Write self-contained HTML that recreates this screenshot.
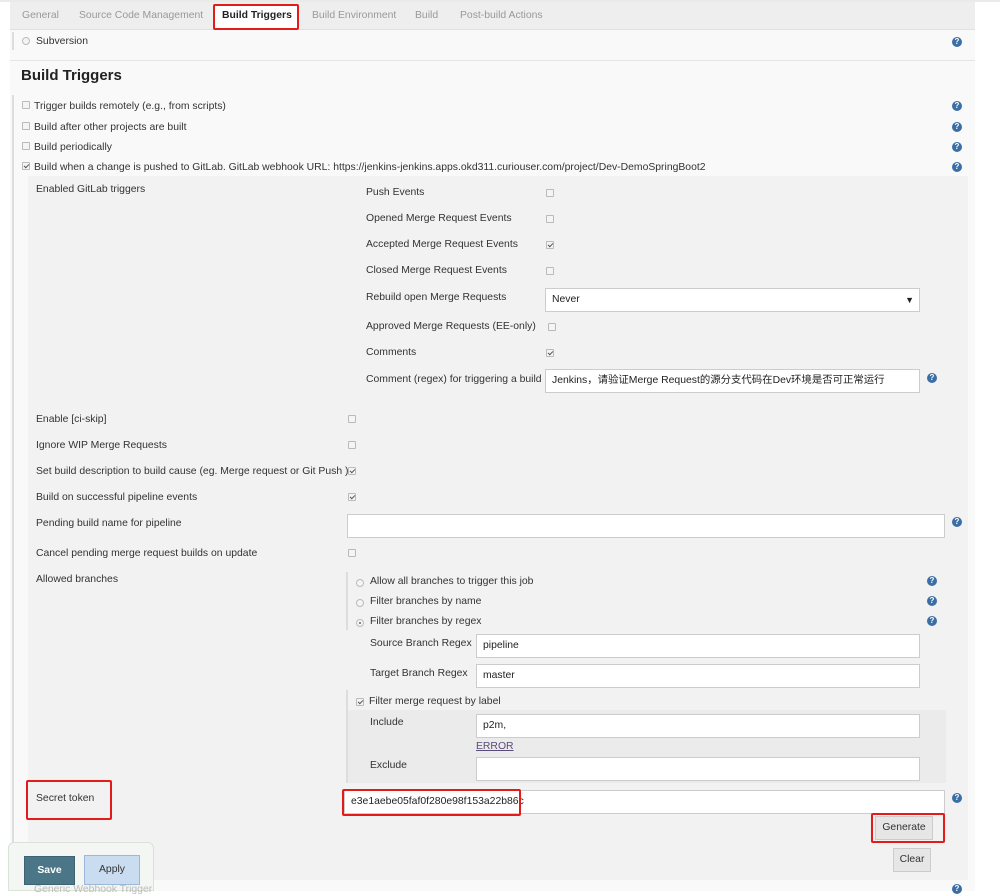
<!DOCTYPE html>
<html><head><meta charset="utf-8"><style>
*{box-sizing:border-box;margin:0;padding:0}
body{width:1000px;height:891px;position:relative;background:#fff;font-family:"Liberation Sans","Noto Sans CJK SC",sans-serif;font-size:10.4px;color:#333;overflow:hidden}
.a{position:absolute;white-space:nowrap}
.t{margin-top:1px}
.cb{position:absolute;width:8px;height:8px;border:1px solid #bbb;background:#f4f4f4;border-radius:1px}
.cb.on::after{content:"";position:absolute;left:2px;top:0px;width:2px;height:4px;border:solid #555;border-width:0 1.5px 1.5px 0;transform:rotate(45deg)}
.rd{position:absolute;width:8px;height:8px;border:1px solid #bbb;border-radius:50%;background:#f4f4f4}
.rd.on::after{content:"";position:absolute;left:2px;top:2px;width:2px;height:2px;background:#666;border-radius:50%}
.h{position:absolute;width:10px;height:10px;border-radius:50%;background:#3a6ea5;color:#fff;font-size:8px;line-height:10px;text-align:center;font-weight:bold}
.in{position:absolute;background:#fff;border:1px solid #ccc;height:24px;padding:0 6px;line-height:22px;font-size:10.4px;color:#222}
.red{position:absolute;border:2px solid #e31b1b;border-radius:2px}
</style></head><body>
<div class="a" style="left:10px;top:0;width:965px;height:891px;background:#f9f9f9"></div>
<div class="a" style="left:10px;top:0;width:965px;height:30px;background:#eeeeee;border-bottom:1px solid #e0e0e0"></div>
<div class="a" style="left:0;top:0;width:1000px;height:2px;background:#e8ece8"></div>
<div class="a" style="left:22px;top:10px;color:#999">General</div>
<div class="a" style="left:79px;top:10px;color:#999">Source Code Management</div>
<div class="a" style="left:214px;top:5px;width:84px;height:25px;background:#fff"></div>
<div class="a" style="left:222px;top:10px;color:#222;font-weight:bold">Build Triggers</div>
<div class="red" style="left:213px;top:4px;width:86px;height:26px"></div>
<div class="a" style="left:312px;top:10px;color:#999">Build Environment</div>
<div class="a" style="left:415px;top:10px;color:#999">Build</div>
<div class="a" style="left:460px;top:10px;color:#999">Post-build Actions</div>
<div class="a" style="left:12px;top:32px;width:2px;height:18px;background:#ddd"></div>
<div class="rd" style="left:22px;top:37px"></div>
<div class="a" style="left:36px;top:36px">Subversion</div>
<div class="h" style="left:952px;top:37px">?</div>
<div class="a" style="left:10px;top:60px;width:965px;height:1px;background:#e5e5e5"></div>
<div class="a" style="left:21px;top:67px;font-size:15px;font-weight:bold;color:#222">Build Triggers</div>
<div class="a" style="left:12px;top:95px;width:2px;height:785px;background:#ddd"></div>
<div class="cb" style="left:22px;top:101px"></div><div class="a" style="left:34px;top:101px">Trigger builds remotely (e.g., from scripts)</div><div class="h" style="left:952px;top:101px">?</div>
<div class="cb" style="left:22px;top:122px"></div><div class="a" style="left:34px;top:122px">Build after other projects are built</div><div class="h" style="left:952px;top:122px">?</div>
<div class="cb" style="left:22px;top:142px"></div><div class="a" style="left:34px;top:142px">Build periodically</div><div class="h" style="left:952px;top:142px">?</div>
<div class="cb on" style="left:22px;top:162px"></div><div class="a" style="left:34px;top:162px">Build when a change is pushed to GitLab. GitLab webhook URL: https://jenkins-jenkins.apps.okd311.curiouser.com/project/Dev-DemoSpringBoot2</div><div class="h" style="left:952px;top:162px">?</div>
<div class="a" style="left:28px;top:176px;width:940px;height:704px;background:#f2f2f2"></div>
<div class="a" style="left:36px;top:184px">Enabled GitLab triggers</div>
<div class="a" style="left:366px;top:187px">Push Events</div><div class="cb" style="left:546px;top:189px"></div>
<div class="a" style="left:366px;top:213px">Opened Merge Request Events</div><div class="cb" style="left:546px;top:215px"></div>
<div class="a" style="left:366px;top:239px">Accepted Merge Request Events</div><div class="cb on" style="left:546px;top:241px"></div>
<div class="a" style="left:366px;top:265px">Closed Merge Request Events</div><div class="cb" style="left:546px;top:267px"></div>
<div class="a" style="left:366px;top:292px">Rebuild open Merge Requests</div>
<div class="in" style="left:545px;top:288px;width:375px">Never<span style="position:absolute;right:5px;font-size:9px">▼</span></div>
<div class="a" style="left:366px;top:321px">Approved Merge Requests (EE-only)</div><div class="cb" style="left:548px;top:323px"></div>
<div class="a" style="left:366px;top:347px">Comments</div><div class="cb on" style="left:546px;top:349px"></div>
<div class="a" style="left:366px;top:374px">Comment (regex) for triggering a build</div>
<div class="in" style="left:545px;top:369px;width:375px">Jenkins，请验证Merge Request的源分支代码在Dev环境是否可正常运行</div>
<div class="h" style="left:927px;top:373px">?</div>
<div class="a" style="left:36px;top:414px">Enable [ci-skip]</div><div class="cb" style="left:348px;top:415px"></div>
<div class="a" style="left:36px;top:440px">Ignore WIP Merge Requests</div><div class="cb" style="left:348px;top:441px"></div>
<div class="a" style="left:36px;top:466px">Set build description to build cause (eg. Merge request or Git Push )</div><div class="cb on" style="left:348px;top:467px"></div>
<div class="a" style="left:36px;top:492px">Build on successful pipeline events</div><div class="cb on" style="left:348px;top:493px"></div>
<div class="a" style="left:36px;top:518px">Pending build name for pipeline</div>
<div class="in" style="left:347px;top:514px;width:598px"></div><div class="h" style="left:952px;top:517px">?</div>
<div class="a" style="left:36px;top:548px">Cancel pending merge request builds on update</div><div class="cb" style="left:348px;top:549px"></div>
<div class="a" style="left:36px;top:574px">Allowed branches</div>
<div class="a" style="left:346px;top:572px;width:2px;height:58px;background:#ddd"></div>
<div class="rd" style="left:356px;top:579px"></div><div class="a" style="left:370px;top:576px">Allow all branches to trigger this job</div><div class="h" style="left:927px;top:576px">?</div>
<div class="rd" style="left:356px;top:599px"></div><div class="a" style="left:370px;top:596px">Filter branches by name</div><div class="h" style="left:927px;top:596px">?</div>
<div class="rd on" style="left:356px;top:619px"></div><div class="a" style="left:370px;top:616px">Filter branches by regex</div><div class="h" style="left:927px;top:616px">?</div>
<div class="a" style="left:370px;top:638px">Source Branch Regex</div><div class="in" style="left:476px;top:634px;width:444px">pipeline</div>
<div class="a" style="left:370px;top:668px">Target Branch Regex</div><div class="in" style="left:476px;top:664px;width:444px">master</div>
<div class="a" style="left:346px;top:690px;width:2px;height:93px;background:#ddd"></div>
<div class="cb on" style="left:356px;top:698px"></div><div class="a" style="left:369px;top:696px">Filter merge request by label</div>
<div class="a" style="left:348px;top:710px;width:598px;height:73px;background:#ebebeb"></div>
<div class="a" style="left:370px;top:717px">Include</div><div class="in" style="left:476px;top:714px;width:444px">p2m,</div>
<div class="a" style="left:476px;top:741px;color:#5b4a7a;text-decoration:underline">ERROR</div>
<div class="a" style="left:370px;top:760px">Exclude</div><div class="in" style="left:476px;top:757px;width:444px"></div>
<div class="a" style="left:36px;top:793px">Secret token</div>
<div class="red" style="left:26px;top:780px;width:86px;height:40px"></div>
<div class="in" style="left:344px;top:790px;width:601px;padding-left:6px">e3e1aebe05faf0f280e98f153a22b86c</div>
<div class="red" style="left:342px;top:789px;width:179px;height:27px"></div>
<div class="h" style="left:952px;top:793px">?</div>
<div class="a" style="left:875px;top:816px;width:58px;height:24px;background:#e6e6e6;border:1px solid #ccc;text-align:center;line-height:22px;color:#333">Generate</div>
<div class="red" style="left:871px;top:813px;width:74px;height:30px"></div>
<div class="a" style="left:893px;top:848px;width:38px;height:24px;background:#e6e6e6;border:1px solid #ccc;text-align:center;line-height:22px;color:#333">Clear</div>
<div class="a" style="left:8px;top:842px;width:146px;height:49px;background:#f3f6f3;border:1px solid #d7e4d7;border-radius:6px 6px 0 0"></div>
<div class="a" style="left:34px;top:884px;color:#bbb">Generic Webhook Trigger</div>
<div class="a" style="left:24px;top:856px;width:51px;height:29px;background:#4a7688;border:1px solid #3d6272;color:#fff;font-weight:bold;text-align:center;line-height:27px">Save</div>
<div class="a" style="left:84px;top:855px;width:56px;height:30px;background:#c9dcf0;border:1px solid #9bb8d8;color:#333;text-align:center;line-height:28px">Apply</div>
<div class="h" style="left:952px;top:884px">?</div>
</body></html>
